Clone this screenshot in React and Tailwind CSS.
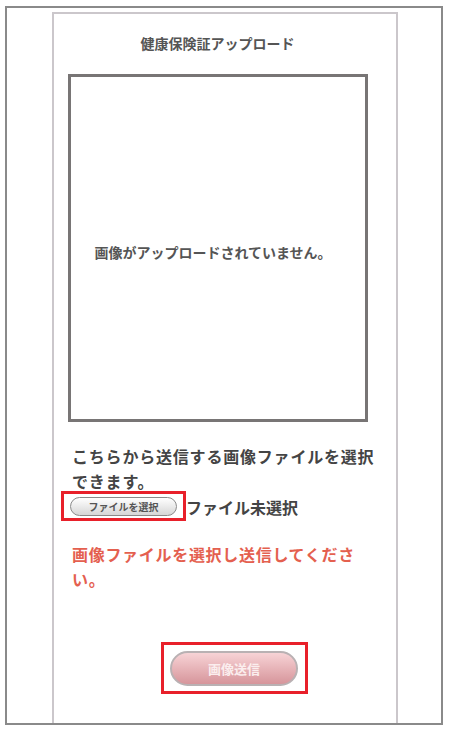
export default function App() {
  return (
    <div className="w-[449px] h-[734px] bg-white pt-[6px] pl-[5px] font-['Noto_Sans_CJK_JP',sans-serif] font-bold">
      <div className="w-[438px] h-[719px] border-2 border-[#8a8a8a] overflow-hidden">
        <div className="ml-[45px] mt-[4px] w-[346px] h-[713px] border-2 border-b-0 border-[#cbc7cb]">
          {/* title */}
          <h1 className="mt-[19px] pr-[15px] text-center text-[14px] leading-[20px] text-[#555]">
            健康保険証アップロード
          </h1>

          {/* preview */}
          <div className="ml-[14px] mt-[21px] w-[300px] h-[348px] border-[3px] border-[#787575] flex items-center justify-center pt-[8px] pr-[10px]">
            <p className="text-[14px] leading-[20px] text-[#555]">画像がアップロードされていません。</p>
          </div>

          <div className="ml-[18px] mt-[22px] w-[308px]">
            <p className="text-[16px] leading-[25px] tracking-[0.8px] text-[#444]">
              こちらから送信する画像ファイルを選択できます。
            </p>
            <div className="flex items-center h-[25px]">
              <div className="relative ml-[-2px]">
                <button className="w-[107px] h-[19px] rounded-full border border-[#8a8a8a] bg-gradient-to-b from-white to-[#d6d6d6] text-[10px] leading-none text-[#555] flex items-center justify-center">
                  ファイルを選択
                </button>
                <div className="absolute left-[-9px] top-[-6px] w-[125px] h-[30px] border-[3px] border-[#e8202a]" />
              </div>
              <span className="ml-[9px] text-[16px] text-[#444]">ファイル未選択</span>
            </div>
            <p className="mt-[23px] text-[16px] leading-[25px] tracking-[0.7px] text-[#e4604f]">
              画像ファイルを選択し送信してください。
            </p>
          </div>

          {/* submit */}
          <div className="relative ml-[116px] mt-[59px] w-[128px]">
            <button className="w-[128px] h-[35px] rounded-full border-2 border-[#b9b1b3] bg-gradient-to-b from-[#f7d3d6] to-[#d6959b] text-[13px] text-[#fbeeee] flex items-center justify-center">
              画像送信
            </button>
            <div className="absolute left-[-9px] top-[-9px] w-[147px] h-[52px] border-[3px] border-[#e8202a]" />
          </div>
        </div>
      </div>
    </div>
  );
}
